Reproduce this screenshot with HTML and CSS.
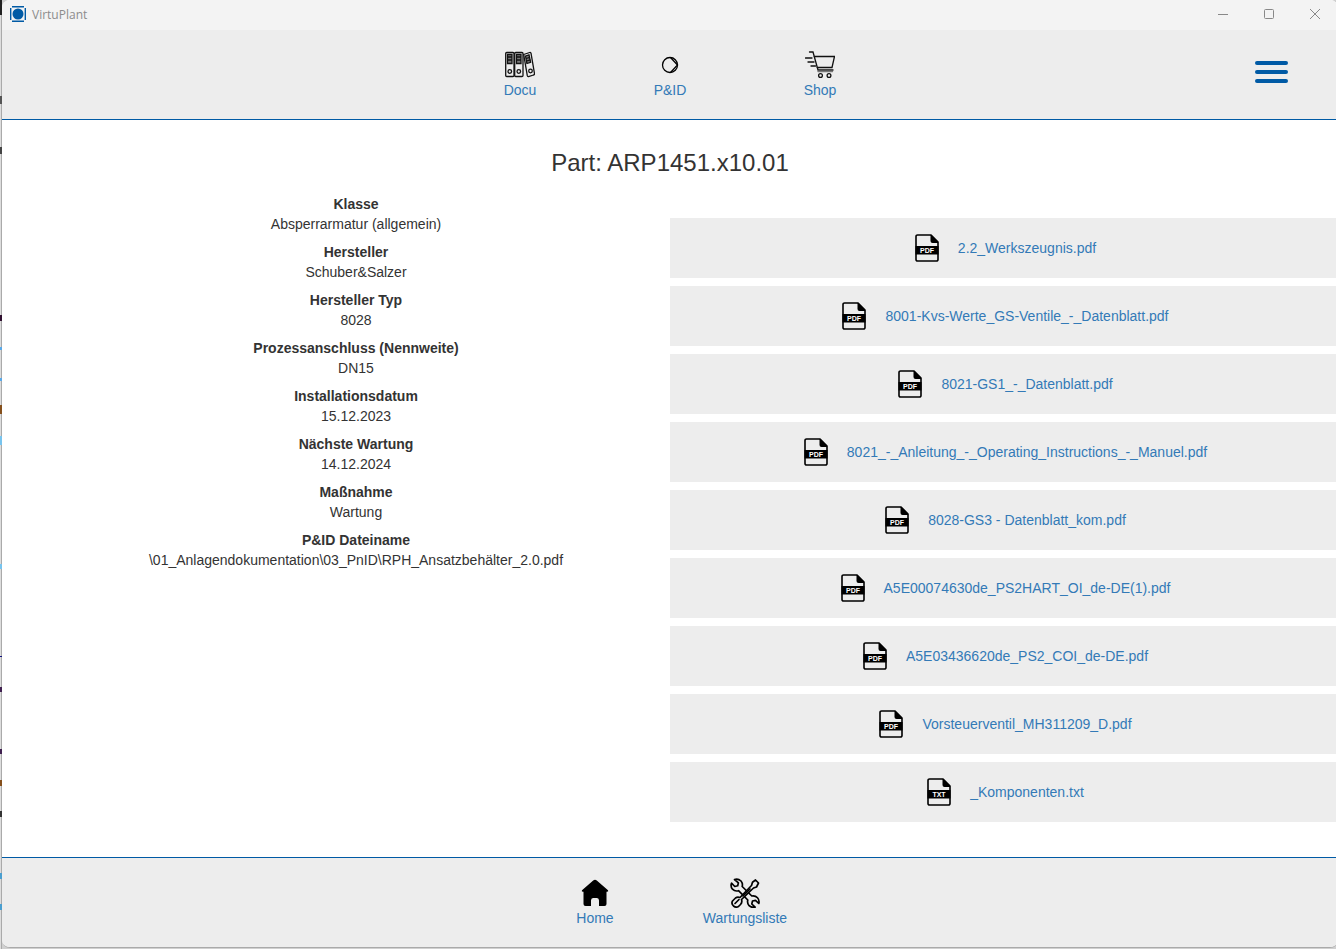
FILE: index.html
```
<!DOCTYPE html>
<html lang="de">
<head>
<meta charset="utf-8">
<title>VirtuPlant</title>
<link rel="stylesheet" href="styles.css">
</head>
<body>
<svg class="defs" aria-hidden="true">
  <symbol id="file" viewBox="0 0 30 30">
    <path d="M5.500 2h13.500l7 7v17.500a1.500 1.500 0 0 1-1.500 1.500h-19a1.500 1.500 0 0 1-1.500-1.500v-23a1.500 1.500 0 0 1 1.500-1.500z" fill="none" stroke="#000" stroke-width="1.600"/>
    <path d="M18.500 2h1l6.500 6.500v1.500h-5.500a2 2 0 0 1-2-2z"/>
    <path d="M3.500 13h23v8.500h-23z"/>
  </symbol>
</svg>
<div class="window">
  <div class="titlebar">
    <svg class="app-icon" width="16" height="16" viewBox="0 0 16 16"><path d="M2 .7h12M2 15.300h12M.7 2v12M15.300 2v12" stroke="#005aa5" stroke-width="1.400" fill="none"/><circle cx="8" cy="8" r="5.500" fill="#005aa5"/></svg>
    <span class="app-name">VirtuPlant</span>
    <div class="controls">
      <button type="button" aria-label="Minimieren"><svg width="12" height="12" viewBox="0 0 12 12"><path d="M1 6.500h10"/></svg></button>
      <button type="button" aria-label="Maximieren"><svg width="12" height="12" viewBox="0 0 12 12"><rect x="1.500" y="1.500" width="9" height="9" rx="1"/></svg></button>
      <button type="button" aria-label="Schließen"><svg width="12" height="12" viewBox="0 0 12 12"><path d="M1 1l10 10M11 1l-10 10"/></svg></button>
    </div>
  </div>

  <header class="bar top">
    <nav class="nav">
      <a href="#docu"><svg width="30" height="30" viewBox="0 0 30 30" fill="none" stroke="#111" stroke-width="1.300">
        <rect x=".7" y="2.500" width="8.300" height="24" rx="1"/><rect x="9.700" y="2.500" width="8.300" height="24" rx="1"/>
        <path d="M2.500 4.500h4.500v9h-4.500zM11.500 4.500h4.500v9h-4.500z" fill="#777"/><path d="M3 7h4M3 10h4M12 7h4M12 10h4"/>
        <circle cx="4.800" cy="21.500" r="1.800"/><circle cx="13.800" cy="21.500" r="1.800"/>
        <path d="M18.700 4.500l6-2q1-.3 1.300.7l3.500 20.500q.1 1-1 1.300l-5 1.500q-1 .2-1.200-.8z"/><path d="M20.500 6l3.500-1.200 1.600 7.500-3.700 1.200z" fill="#777"/><path d="M21 8.500l4-1.200M21.500 11l4-1.200"/><circle cx="25.500" cy="21" r="1.800"/>
      </svg>Docu</a>
      <a href="#pid"><svg width="30" height="30" viewBox="0 0 30 30" fill="none" stroke="#000" stroke-width="1.300"><circle cx="15" cy="15" r="7.500"/><path d="M15.500 7.500l7 7.500-7 7.500"/></svg>P&amp;ID</a>
      <a href="#shop"><svg width="30" height="30" viewBox="0 0 30 30" fill="none" stroke="#111" stroke-width="1.300" stroke-linecap="round">
        <path d="M4.500 2h3.500l5 18h15M9 6.500h20.500l-2.500 11h-15M.5 8h6.500M3 12h6M6 16h4.500"/><path d="M13 21.500h14.500" stroke="#777"/><circle cx="15.500" cy="25.500" r="1.900"/><circle cx="24" cy="25.500" r="1.900"/>
      </svg>Shop</a>
    </nav>
    <button type="button" class="menu" aria-label="Menü"><i></i><i></i><i></i></button>
  </header>

  <main>
    <h1>Part: ARP1451.x10.01</h1>
    <div class="columns">
      <dl class="facts">
        <dt>Klasse</dt><dd>Absperrarmatur (allgemein)</dd>
        <dt>Hersteller</dt><dd>Schuber&amp;Salzer</dd>
        <dt>Hersteller Typ</dt><dd>8028</dd>
        <dt>Prozessanschluss (Nennweite)</dt><dd>DN15</dd>
        <dt>Installationsdatum</dt><dd>15.12.2023</dd>
        <dt>Nächste Wartung</dt><dd>14.12.2024</dd>
        <dt>Maßnahme</dt><dd>Wartung</dd>
        <dt>P&amp;ID Dateiname</dt><dd>\01_Anlagendokumentation\03_PnID\RPH_Ansatzbehälter_2.0.pdf</dd>
      </dl>
      <ul class="files">
        <li><a href="#f1"><svg class="doc" viewBox="0 0 30 30"><use href="#file"/><text x="15" y="20">PDF</text></svg>2.2_Werkszeugnis.pdf</a></li>
        <li><a href="#f2"><svg class="doc" viewBox="0 0 30 30"><use href="#file"/><text x="15" y="20">PDF</text></svg>8001-Kvs-Werte_GS-Ventile_-_Datenblatt.pdf</a></li>
        <li><a href="#f3"><svg class="doc" viewBox="0 0 30 30"><use href="#file"/><text x="15" y="20">PDF</text></svg>8021-GS1_-_Datenblatt.pdf</a></li>
        <li><a href="#f4"><svg class="doc" viewBox="0 0 30 30"><use href="#file"/><text x="15" y="20">PDF</text></svg>8021_-_Anleitung_-_Operating_Instructions_-_Manuel.pdf</a></li>
        <li><a href="#f5"><svg class="doc" viewBox="0 0 30 30"><use href="#file"/><text x="15" y="20">PDF</text></svg>8028-GS3 - Datenblatt_kom.pdf</a></li>
        <li><a href="#f6"><svg class="doc" viewBox="0 0 30 30"><use href="#file"/><text x="15" y="20">PDF</text></svg>A5E00074630de_PS2HART_OI_de-DE(1).pdf</a></li>
        <li><a href="#f7"><svg class="doc" viewBox="0 0 30 30"><use href="#file"/><text x="15" y="20">PDF</text></svg>A5E03436620de_PS2_COI_de-DE.pdf</a></li>
        <li><a href="#f8"><svg class="doc" viewBox="0 0 30 30"><use href="#file"/><text x="15" y="20">PDF</text></svg>Vorsteuerventil_MH311209_D.pdf</a></li>
        <li><a href="#f9"><svg class="doc" viewBox="0 0 30 30"><use href="#file"/><text x="15" y="20">TXT</text></svg>_Komponenten.txt</a></li>
      </ul>
    </div>
  </main>

  <footer class="bar bottom">
    <nav class="nav">
      <a href="#home"><svg width="30" height="30" viewBox="0 0 30 30"><path d="M13.200 2.500q1.800-1.400 3.600 0l11.200 9.800q.8 1.200-.8 1.400h-.7v12.300q0 2-2 2h-5.500v-5.500q0-2.500-2-2.500h-4q-2 0-2 2.500v5.500h-5.500q-2 0-2-2v-12.300h-.7q-1.600-.2-.8-1.400z"/></svg>Home</a>
      <a href="#wartung"><svg width="30" height="30" viewBox="0 0 30 30" fill="none" stroke="#000" stroke-width="1.700" stroke-linejoin="round" stroke-linecap="round">
        <path d="M4.500 1.500q3.500-1.300 6.500 1.500 2 2.500 1.200 5.500l9.600 9.500q3.500-.6 5.700 1.800 2.200 2.500 1.300 5.700l-3.300-3.200-3 .7-.7 3 3.300 3.200q-3.500.8-6-1.500-2.200-2.500-1.300-5.700l-9.300-9.300q-3.500 1-6-1.500-2.200-2.700-1-6l3.300 3.300 2.900-.8.700-2.900z"/>
        <path d="M25.500 2l3 3-2 4-3 1-12 11.500q1 3-1 5l-2 2q-2.500 1.500-5-.5-2.500-2.500-1-5l3-3q2-1.500 4.500-.5l11.500-12 1-3.300z" fill="#ededed"/><path d="M5 25.500l4-4M13 18l7-7"/>
      </svg>Wartungsliste</a>
    </nav>
  </footer>
</div>
</body>
</html>
```
FILE: styles.css
```
* { box-sizing: border-box; }

body {
  margin: 0;
  min-height: 100vh;
  padding: 0 0 1px 2px;
  overflow-x: hidden;
  display: flex;
  font: 14px/20px "Liberation Sans", Arial, sans-serif;
  color: #333;
  background:
    linear-gradient(#222 0 0) 0 0 / 2px 15px no-repeat,
    linear-gradient(#555 0 0) 0 96px / 2px 8px no-repeat,
    linear-gradient(#444 0 0) 0 147px / 2px 7px no-repeat,
    linear-gradient(#301030 0 0) 0 315px / 2px 6px no-repeat,
    linear-gradient(#5aa9e8 0 0) 0 347px / 2px 3px no-repeat,
    linear-gradient(#5aa9e8 0 0) 0 378px / 2px 3px no-repeat,
    linear-gradient(#85501c 0 0) 0 405px / 2px 9px no-repeat,
    linear-gradient(#78c4ee 0 0) 0 436px / 2px 9px no-repeat,
    linear-gradient(#78c4ee 0 0) 0 564px / 2px 5px no-repeat,
    linear-gradient(#101080 0 0) 0 656px / 2px 1px no-repeat,
    linear-gradient(#402050 0 0) 0 687px / 2px 5px no-repeat,
    linear-gradient(#402050 0 0) 0 749px / 2px 5px no-repeat,
    linear-gradient(#85501c 0 0) 0 780px / 2px 6px no-repeat,
    linear-gradient(#333 0 0) 0 811px / 2px 6px no-repeat,
    linear-gradient(#4a9fd0 0 0) 0 873px / 2px 6px no-repeat,
    linear-gradient(#4a9fd0 0 0) 0 904px / 2px 6px no-repeat,
    linear-gradient(90deg, #ddd 1px, #aaa 1px, #aaa 2px, #d0d0d0 2px);
}

.defs { position: absolute; width: 0; height: 0; }

a { color: #337ab7; text-decoration: none; }

button { border: 0; padding: 0; background: none; }

.window {
  flex: 1;
  min-width: 0;
  margin-right: -2px;
  display: flex;
  flex-direction: column;
  background: #fff;
  border-bottom: 1px solid #aaa;
  border-radius: 8px;
  overflow: hidden;
}

.titlebar {
  height: 30px;
  padding: 0 7px 2px 8px;
  display: flex;
  align-items: center;
  gap: 6px;
  background: #f3f3f3;
}

.app-name {
  padding-top: 2px;
  font: 12px/16px "Open Sans", "Noto Sans", sans-serif;
  color: #8c8c8c;
}

.controls {
  margin-left: auto;
  display: flex;
  gap: 14px;
}

.controls button {
  width: 32px;
  height: 28px;
  display: flex;
  align-items: center;
  justify-content: center;
}

.controls svg { fill: none; stroke: #888; }

.bar {
  position: relative;
  background: #ededed;
  padding: 20px 0 19px;
}

.top { border-bottom: 1px solid #005aa5; }
.bottom { border-top: 1px solid #005aa5; }

.nav {
  display: flex;
  justify-content: center;
}

.nav a {
  width: 150px;
  display: flex;
  flex-direction: column;
  align-items: center;
}

.menu {
  position: absolute;
  top: 31px;
  right: 50px;
  width: 33px;
  display: grid;
  gap: 5px;
}

.menu i {
  height: 4px;
  border-radius: 2px;
  background: #005aa5;
}

main {
  flex: 1;
  padding-bottom: 35px;
}

h1 {
  margin: 30px 0 18px;
  font-size: 24px;
  line-height: 26px;
  font-weight: 400;
  text-align: center;
}

.columns {
  display: grid;
  grid-template-columns: 1fr 1fr;
}

.facts {
  margin: 0;
  padding-left: 40px;
  text-align: center;
}

.facts dt { font-weight: 700; }
.facts dd { margin: 0 0 8px; }

.files {
  margin: 24px 0 0;
  padding: 0;
  list-style: none;
  display: grid;
  gap: 8px;
}

.files a {
  height: 60px;
  display: flex;
  align-items: center;
  justify-content: center;
  gap: 16px;
  background: #ededed;
}

.doc { width: 30px; height: 30px; }

.doc text {
  font: 700 7px "Liberation Sans", Arial, sans-serif;
  fill: #fff;
  text-anchor: middle;
}
```
